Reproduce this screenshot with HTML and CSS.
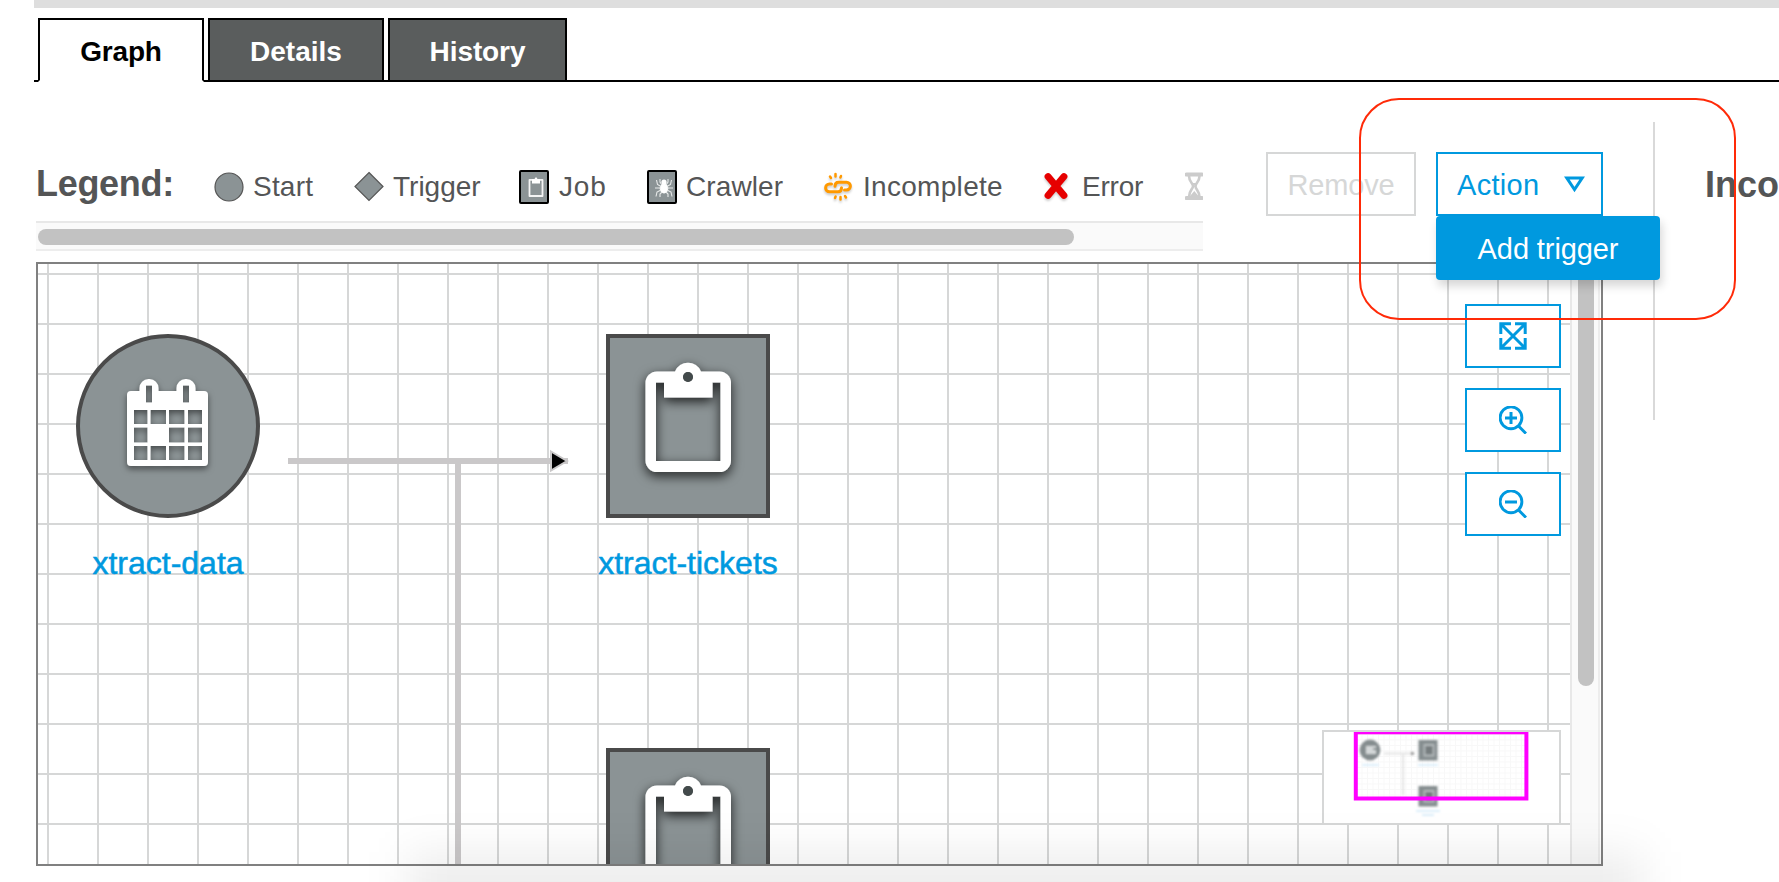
FILE: index.html
```
<!DOCTYPE html>
<html lang="en">
<head>
<meta charset="utf-8">
<title>Workflow graph</title>
<link rel="stylesheet" href="styles.css">
</head>
<body>
<div class="topbar"></div>
<nav class="tabs">
  <a class="tab tab-active">Graph</a>
  <a class="tab tab-details">Details</a>
  <a class="tab tab-history">History</a>
</nav>

<div class="workspace">
  <section class="graph">
    <div class="toolbar">
      <div class="legend">
        <div class="legend-row">
          <h2 class="title">Legend:</h2>
          <span class="item start"><svg width="30" height="34"><circle cx="15" cy="17" r="14" fill="#8b9395" stroke="#555" stroke-width="1.2"/></svg>Start</span>
          <span class="item trigger"><svg width="30" height="34"><path d="M15 2.500 29 16.500 15 30.500 1 16.500Z" fill="#8b9395" stroke="#555" stroke-width="1.2"/></svg>Trigger</span>
          <span class="item job"><svg width="30" height="34"><rect x="1" y="1" width="28" height="32" rx="1" fill="#8b9395" stroke="#000" stroke-width="2"/><path d="M10.500 9.800h13v16.200h-13z" fill="none" stroke="#f4f4f4" stroke-width="1.800" stroke-linejoin="round"/><path d="M13 9h2.500q1.500-3.500 3 0h2.500v4.500h-8z" fill="#fff"/></svg>Job</span>
          <span class="item crawler"><svg width="30" height="34"><rect x="1" y="1" width="28" height="32" rx="1" fill="#8b9395" stroke="#000" stroke-width="2"/><ellipse cx="17" cy="18.500" rx="4.300" ry="5" fill="#fff"/><circle cx="17" cy="12" r="2.600" fill="#fff"/><path d="M14 16.500 10.500 14.500 9.500 10M14 18H8M14 20 10 22 9 26.500M15 22l-2 2v3M20 16.500l3.500-2 1-4.500M20 18h6M20 20l4 2 1 4.500M19 22l2 2v3M15 15l-2-3V9M19 15l2-3V9" fill="none" stroke="#e9ebeb" stroke-width="1.100"/></svg>Crawler</span>
          <span class="item incomplete"><svg class="raised" width="28" height="34"><g fill="none" stroke="#f90" stroke-width="3" stroke-linecap="round"><path d="M7.500 14H5.500a3.900 3.900 0 0 0 0 7.800H14q3.500 0 3.500-4"/><path d="M20.500 20H22.500a3.900 3.900 0 0 0 0-7.800H14.500q-3.500 0-3.500 4"/></g><path d="M11.500 4v2.500M6 6.500l1 1.500M17 6l-.6 1.500M16.500 29.500V27M11 28l.6-1.500M22 27.500l-1-1.500" stroke="#f90" stroke-width="2.500" stroke-linecap="round"/></svg>Incomplete</span>
          <span class="item error"><svg class="raised" width="26" height="34"><path d="M5 6.500 21 25.500M21 6.500 5 25.500" stroke="#e60000" stroke-width="6.800" stroke-linecap="round"/></svg>Error</span>
          <span class="item waiting"><svg width="18" height="34"><path d="M1.500 4.500h15.500M1.500 28h15.500" stroke="#ccc" stroke-width="4" stroke-linecap="round"/><path d="M4 6c0 6 4 7 4 10.200S4 20 4 27M14.500 6c0 6-4 7-4 10.200s4 4.500 4 10.800" fill="none" stroke="#ccc" stroke-width="2.600"/><path d="m5 26 4.300-5 4.200 5zM7 13h4.500l-2.200 3z" fill="#ccc"/></svg></span>
        </div>
        <div class="hscroll"><div class="hthumb"></div></div>
      </div>
      <div class="actions">
        <button class="btn remove">Remove</button>
        <div class="menu-wrap">
          <button class="btn action"><span>Action</span><svg width="21" height="17"><path d="M2.700 1.900h15.600L10.500 13.500z" fill="none" stroke="#0099df" stroke-width="3"/></svg></button>
          <div class="menu">Add trigger</div>
        </div>
      </div>
    </div>

    <div class="canvas">
      <svg class="diagram" width="1532" height="600" viewBox="38 264 1532 600">
        <defs>
          <pattern id="grid" x="47" y="273" width="50" height="50" patternUnits="userSpaceOnUse"><path d="M1 0v50M0 1h50" stroke="#d6d7d7" stroke-width="2"/></pattern>
          <filter id="shadow" x="-30%" y="-30%" width="160%" height="160%"><feDropShadow dx="0" dy="4" stdDeviation="6" flood-color="#000" flood-opacity=".8"/></filter>
          <filter id="soft" x="-30%" y="-30%" width="160%" height="160%"><feDropShadow dx="0" dy="3" stdDeviation="3" flood-color="#000" flood-opacity=".5"/></filter>
          <g id="job">
            <rect x="2" y="2" width="160" height="180" fill="#8b9395" stroke="#4a4a4a" stroke-width="4"/>
            <path filter="url(#shadow)" fill="#fff" fill-rule="evenodd" d="M51 37.500H69A14 14 0 0 1 95 37.500H113.500A11.500 11.500 0 0 1 125 49V126.500A11.500 11.500 0 0 1 113.500 138H51A11.500 11.500 0 0 1 39.500 126.500V49A11.500 11.500 0 0 1 51 37.500ZM50 48.500V127H114.500V48.500H106.500V63.500H58V48.500ZM87 43A5 5 0 1 0 77 43A5 5 0 1 0 87 43Z"/>
            <circle cx="82" cy="43" r="5" fill="#434a4b"/>
          </g>
        </defs>
        <rect x="38" y="264" width="1532" height="600" fill="url(#grid)"/>
        <path d="M288 461H568M458 461V864" fill="none" stroke="#cac8c9" stroke-width="6"/>
        <path d="M551 451.500 567 461 551 470.500Z" fill="#000" stroke="#cac8c9" stroke-width="2"/>
        <circle cx="168" cy="426" r="90" fill="#8b9395" stroke="#4a4a4a" stroke-width="4"/>
        <g filter="url(#soft)">
          <path fill="#fff" fill-rule="evenodd" d="M131 391H139.500V388a9 9 0 0 1 9-9h1a9 9 0 0 1 9 9v3H176.500V388a9 9 0 0 1 9-9h1a9 9 0 0 1 9 9v3H204a4 4 0 0 1 4 4V462a4 4 0 0 1-4 4H131a4 4 0 0 1-4-4V395a4 4 0 0 1 4-4ZM146 385.500v17h6v-17ZM183 385.500v17h6v-17ZM134 410v14h13.500v-14ZM150.500 410v14h15.500v-14ZM169 410v14h15.500v-14ZM188 410v14h14v-14ZM134 427.500v15h13.500v-15ZM169 427.500v15h15.500v-15ZM188 427.500v15h14v-15ZM134 446v14h13.500v-14ZM150.500 446v14h15.500v-14ZM169 446v14h15.500v-14ZM188 446v14h14v-14Z"/>
        </g>
        <use href="#job" x="606" y="334"/>
        <use href="#job" x="606" y="748"/>
        <text class="node-name" x="168" y="574">xtract-data</text>
        <text class="node-name" x="688" y="574">xtract-tickets</text>
      </svg>
      <div class="vscroll"><div class="vthumb"></div></div>
      <div class="zoom-controls">
        <button class="tool"><svg width="28" height="28"><path d="M12 1.800H1.800V12M16 1.800H26.200V12M12 26.200H1.800V16M16 26.200H26.200V16M2 2 26 26M26 2 2 26" fill="none" stroke="#0099df" stroke-width="3"/></svg></button>
        <button class="tool"><svg width="28" height="28"><path d="M19.500 20 27 27.500M6 11.900H18M12 5.900V17.900" stroke="#0099df" stroke-width="3"/><circle cx="12" cy="11.800" r="10.900" fill="none" stroke="#0099df" stroke-width="2.900"/></svg></button>
        <button class="tool"><svg width="28" height="28"><path d="M19.500 20 27 27.500M6 11.900H18" stroke="#0099df" stroke-width="3"/><circle cx="12" cy="11.800" r="10.900" fill="none" stroke="#0099df" stroke-width="2.900"/></svg></button>
      </div>
      <div class="minimap">
        <svg width="235" height="91" viewBox="1324 732 235 91">
          <defs>
            <pattern id="minigrid" x="1356" y="734" width="5.500" height="5.500" patternUnits="userSpaceOnUse"><path d="M.5 0v5.500M0 .5h5.500" stroke="#f8f8f8"/></pattern>
            <filter id="blur"><feGaussianBlur stdDeviation=".8"/></filter>
          </defs>
          <rect x="1356" y="734" width="170" height="64" fill="url(#minigrid)"/>
          <g filter="url(#blur)">
            <path d="M1384 753.500H1414M1403 754V795" stroke="#e4e4e4" stroke-width="2" fill="none"/>
            <path d="M1411 751.500 1415 753.500 1411 755.500Z" fill="#888"/>
            <circle cx="1370" cy="750" r="10.400" fill="#858d8f"/>
            <path d="M1366 746h10v2h-3v2h3v4h-10z" fill="#d4d8d9"/>
            <path d="M1418.500 740h19v20.500h-19zM1418.500 786h19v20.500h-19z" fill="#858d8f"/>
            <path d="M1424.500 745h9v10.500h-9zM1424.500 791h9v10.500h-9z" fill="#747c7e" stroke="#b4babb" stroke-width="1.800"/>
            <path d="M1362 765h17M1418 765h20M1416 811h24M1422 815h12" stroke="#dceefa" stroke-width="1.800"/>
          </g>
          <rect x="1355.800" y="732.300" width="170.600" height="66.200" fill="none" stroke="#f0f" stroke-width="4"/>
        </svg>
      </div>
    </div>
  </section>
  <aside class="side"><h2 class="title">Inco</h2></aside>
</div>
<div class="callout"></div>
<div class="shade-clip"><div class="bottom-shade"></div></div>
</body>
</html>
```
FILE: styles.css
```
* { box-sizing: border-box; }
html, body { margin: 0; height: 882px; overflow: hidden; background: #fff; }
body { position: relative; display: flow-root; font-family: "Liberation Sans", Arial, sans-serif; font-size: 28px; color: #545556; }
svg { display: block; flex: none; }
button { font: inherit; background: #fff; margin: 0; padding: 0; border-radius: 0; }

.topbar { height: 8px; margin-left: 34px; background: #dedede; }
.tabs { display: flex; gap: 4px; height: 64px; margin: 10px 0 0 34px; padding-left: 4px; background: linear-gradient(#000, #000) left bottom / 100% 2px no-repeat; }
.tab { height: 64px; border: 2px solid #000; line-height: 63px; text-align: center; font-weight: bold; color: #fff; background: #5a5d5d; }
.tab-active { width: 166px; background: #fff; color: #000; border-bottom-color: #fff; letter-spacing: -.2px; }
.tab-details { width: 176px; }
.tab-history { width: 179px; letter-spacing: -.1px; }

.workspace { display: flex; padding-left: 36px; }
.graph { width: 1567px; flex: none; }
.toolbar { display: flex; height: 180px; padding-top: 70px; }
.legend { width: 1167px; flex: none; overflow: hidden; }
.legend-row { display: flex; align-items: center; height: 69px; white-space: nowrap; }
.title { margin: 0; font-size: 36px; line-height: 42px; font-weight: bold; color: #545556; }
.legend .title { width: 178px; padding-bottom: 6px; letter-spacing: -.3px; }
.item { display: flex; align-items: center; flex: none; height: 34px; gap: 9px; }
.start { width: 140px; letter-spacing: .2px; }
.trigger { width: 165px; }
.job { width: 128px; gap: 10px; letter-spacing: .8px; }
.crawler { width: 177px; gap: 9px; letter-spacing: .1px; }
.incomplete { width: 219px; gap: 11px; letter-spacing: .3px; }
.error { width: 142px; gap: 13px; letter-spacing: -.2px; }
.raised { filter: drop-shadow(0 2px 1px rgba(0,0,0,.2)); }
.hscroll { height: 30px; padding: 6px 2px; background: #fafafa; border-top: 2px solid #e8e8e8; border-bottom: 2px solid #ededed; }
.hthumb { width: 1036px; height: 16px; border-radius: 8px; background: #c2c2c2; }
.actions { display: flex; gap: 20px; margin-left: 63px; }
.btn { height: 64px; padding-top: 2px; font-size: 29px; letter-spacing: -.2px; line-height: 58px; }
.remove { width: 150px; border: 2px solid #d6d7d7; color: #d6d7d7; }
.menu-wrap { position: relative; }
.action { display: flex; align-items: center; justify-content: space-between; width: 167px; padding: 2px 16px 0 19px; border: 2px solid #0099df; color: #0099df; letter-spacing: .3px; }
.action svg { margin-bottom: 2px; }
.menu { position: absolute; z-index: 3; left: 0; top: 64px; width: 224px; height: 64px; border-radius: 4px; font-size: 29px; line-height: 66px; text-align: center; letter-spacing: -.1px; color: #fff; background: #0099df; box-shadow: 2px 6px 10px rgba(0,0,0,.16); }

.canvas { position: relative; display: flex; height: 604px; border: 2px solid #808080; background: #fff; }
.diagram { overflow: hidden; }
.node-name { font-size: 32px; text-anchor: middle; fill: #0099df; stroke: #0099df; stroke-width: .5px; }
.vscroll { width: 30px; padding-left: 6px; border-left: 2px solid #e8e8e8; border-right: 2px solid #ededed; background: #fafafa; }
.vthumb { width: 16px; height: 422px; border-radius: 0 0 8px 8px; background: #c2c2c2; }
.zoom-controls { position: absolute; left: 1427px; top: 40px; display: grid; gap: 20px; }
.tool { display: flex; align-items: center; justify-content: center; width: 96px; height: 64px; border: 2px solid #0099df; }
.minimap { position: absolute; left: 1284px; top: 466px; width: 239px; height: 95px; border: 2px solid #d6d7d7; background: #fff; }

.side { height: 298px; margin: 40px 0 0 50px; padding: 42px 0 0 50px; border-left: 2px solid #d9d9d9; }
.callout { position: absolute; z-index: 4; left: 1359px; top: 98px; width: 377px; height: 222px; border: 2px solid #ff2a08; border-radius: 40px; pointer-events: none; }
.shade-clip { position: absolute; z-index: 5; inset: 0; overflow: hidden; contain: strict; pointer-events: none; }
.bottom-shade { width: 1234px; height: 90px; margin: 852px 0 0 408px; background: rgba(0,0,0,.07); filter: blur(22px); }
```
